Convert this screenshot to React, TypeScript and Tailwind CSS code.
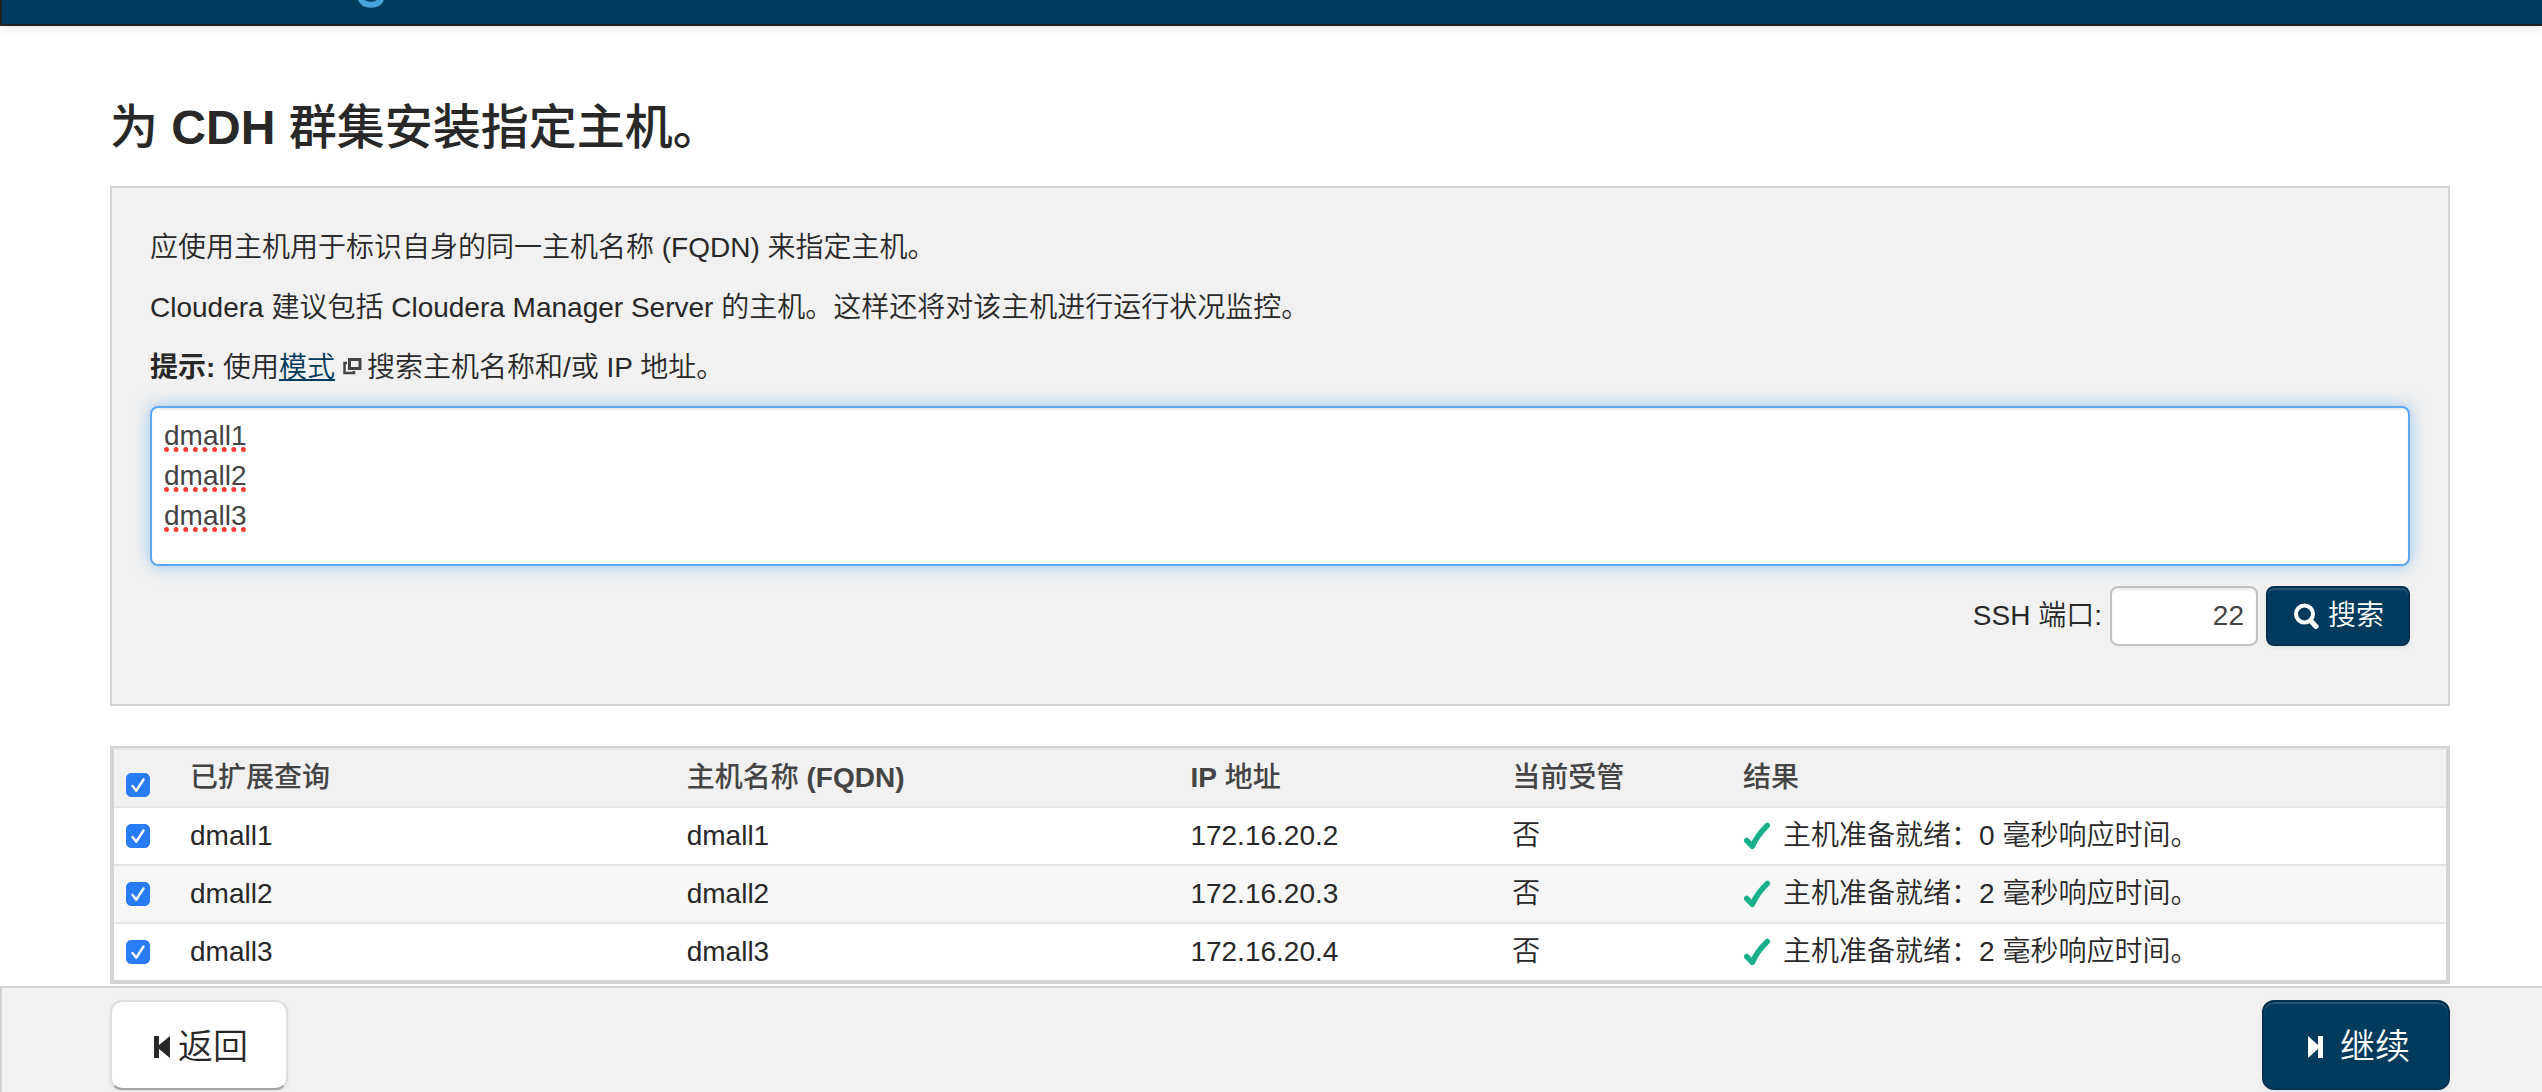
import { useState } from 'react';

type Host = {
  query: string;
  fqdn: string;
  ip: string;
  managed: boolean;
  latency: number;
};

const hosts: Host[] = [
  { query: 'dmall1', fqdn: 'dmall1', ip: '172.16.20.2', managed: false, latency: 0 },
  { query: 'dmall2', fqdn: 'dmall2', ip: '172.16.20.3', managed: false, latency: 2 },
  { query: 'dmall3', fqdn: 'dmall3', ip: '172.16.20.4', managed: false, latency: 2 },
];

const primaryBtn =
  'flex items-center justify-center bg-[#003a5c] text-white border-2 border-[#00304d] shadow-[inset_0_2px_0_rgba(255,255,255,0.15),0_2px_4px_rgba(0,0,0,0.06)]';

const SearchIcon = () => (
  <svg className="w-7 h-7" viewBox="0 0 28 28" fill="none" stroke="currentColor">
    <circle cx="12.5" cy="12" r="8.5" strokeWidth="4" />
    <path d="M18.5 18.5L24 24.5" strokeWidth="5" strokeLinecap="round" />
  </svg>
);

const ExternalIcon = () => (
  <svg
    className="inline-block w-5 h-5 mr-1 align-baseline"
    viewBox="0 0 20 20"
    fill="none"
    stroke="#444"
  >
    <rect x="6.5" y="2.5" width="10.500" height="9" strokeWidth="3" />
    <path d="M4 6H1.500V16H11V14" strokeWidth="2.5" />
  </svg>
);

const GoodIcon = () => (
  <svg
    className="w-7 h-7 shrink-0"
    viewBox="0 0 28 28"
    fill="none"
    stroke="#1bb08c"
    strokeWidth="5.5"
    strokeLinecap="round"
    strokeLinejoin="round"
  >
    <path d="M3.7 18.5L9.3 24.3Q14 13.5 24.3 3.5" />
  </svg>
);

const Checkbox = ({
  label,
  checked,
  onChange,
}: {
  label: string;
  checked: boolean;
  onChange: () => void;
}) => (
  <span className="relative block w-6 h-6">
    <input
      type="checkbox"
      aria-label={label}
      checked={checked}
      onChange={onChange}
      className="peer block appearance-none w-6 h-6 rounded-[5px] border border-[#b5b5b5] bg-white checked:border-[#2a7bf6] checked:bg-[#2a7bf6]"
    />
    <svg
      className="absolute inset-0 w-6 h-6 pointer-events-none opacity-0 peer-checked:opacity-100"
      viewBox="0 0 24 24"
      fill="none"
      stroke="white"
      strokeWidth="2.4"
      strokeLinecap="round"
      strokeLinejoin="round"
    >
      <path d="M6.5 13L10.3 17.7L17.5 6.5" />
    </svg>
  </span>
);

const App = () => {
  const [pattern, setPattern] = useState(hosts.map((h) => h.query).join('\n'));
  const [port, setPort] = useState('22');
  const [selected, setSelected] = useState<string[]>(hosts.map((h) => h.fqdn));

  const allSelected = selected.length === hosts.length;

  const toggle = (fqdn: string) => {
    setSelected((prev) =>
      prev.includes(fqdn) ? prev.filter((f) => f !== fqdn) : [...prev, fqdn]
    );
  };

  return (
    <div className="flex flex-col h-screen overflow-hidden bg-white text-[#282828] text-[28px] leading-10 font-[350] font-['Liberation_Sans','Noto_Sans_CJK_SC',sans-serif]">
      {/* bottom slice of the navbar, only the tail of the logo's "g" shows */}
      <header className="shrink-0 h-[26px] pl-[354px] bg-[#003a5c] border-l-2 border-b-2 border-[#222] shadow-[0_2px_10px_rgba(0,0,0,0.1)]">
        <svg className="w-9 h-3" viewBox="0 0 36 12" fill="none" stroke="#45a5dc">
          <path d="M5-2C5 7 25 7 25-2" strokeWidth="6" />
        </svg>
      </header>

      <main className="flex-1 min-h-0 overflow-hidden pl-[110px] pr-[92px] pt-[72px]">
        <h1 className="text-5xl leading-[60px] font-medium mb-7">
          为 <span className="font-bold">CDH</span> 群集安装指定主机。
        </h1>

        <section className="bg-[#f1f1f1] border-2 border-[#d3d3d3] px-[38px] pt-10 pb-[58px] mb-10">
          <p className="mb-5">应使用主机用于标识自身的同一主机名称 (FQDN) 来指定主机。</p>
          <p className="mb-5">
            Cloudera 建议包括 Cloudera Manager Server 的主机。这样还将对该主机进行运行状况监控。
          </p>
          <p className="mb-[18px]">
            <strong className="font-bold">提示:</strong> 使用
            <a href="#patterns" className="text-[#003a5c] underline">
              模式
            </a>{' '}
            <ExternalIcon />
            搜索主机名称和/或 IP 地址。
          </p>
          {/* dotted red underline = host names the spell checker doesn't know */}
          <textarea
            aria-label="主机名称"
            value={pattern}
            onChange={(e) => setPattern(e.target.value)}
            spellCheck={false}
            className="block w-full h-40 px-3 py-2 resize-none outline-none rounded-lg bg-white text-[#444] border-2 border-[#5ea6ee] shadow-[inset_0_2px_2px_rgba(0,0,0,0.075),0_0_16px_rgba(82,168,236,0.6)] underline decoration-dotted decoration-[#ff3b30] decoration-[5px] underline-offset-2 [text-decoration-skip-ink:none]"
          />
          <div className="flex justify-end items-center gap-2 mt-5">
            <label htmlFor="ssh-port">SSH 端口:</label>
            <input
              id="ssh-port"
              type="text"
              value={port}
              onChange={(e) => setPort(e.target.value)}
              className="w-[148px] h-[60px] px-3 text-right outline-none rounded-lg bg-white text-[#444] border-2 border-[#c0c0c0] shadow-[inset_0_2px_2px_rgba(0,0,0,0.075)]"
            />
            <button type="button" className={`${primaryBtn} w-36 h-[60px] gap-2 rounded-lg`}>
              <SearchIcon />
              搜索
            </button>
          </div>
        </section>

        <div className="border-2 border-[#d3d3d3]">
          <table className="w-full table-fixed border-separate border-spacing-0 border-2 border-[#d3d3d3] border-t-[#e6e6e6] text-left">
            <thead>
              <tr className="bg-[#f1f1f1] text-[#444]">
                <th className="w-16 px-3 pt-3.5">
                  <Checkbox
                    label="全选"
                    checked={allSelected}
                    onChange={() => setSelected(allSelected ? [] : hosts.map((h) => h.fqdn))}
                  />
                </th>
                <th className="w-[21.3%] px-3 py-2 font-medium">已扩展查询</th>
                <th className="w-[21.6%] px-3 py-2 font-medium">
                  主机名称 <span className="font-bold">(FQDN)</span>
                </th>
                <th className="w-[13.8%] px-3 py-2 font-medium">
                  <span className="font-bold">IP</span> 地址
                </th>
                <th className="w-[9.9%] px-3 py-2 font-medium">当前受管</th>
                <th className="px-3 py-2 font-medium">结果</th>
              </tr>
            </thead>
            <tbody>
              {hosts.map((host) => (
                <tr
                  key={host.fqdn}
                  className="even:bg-[#f7f7f7] *:border-t-2 *:border-[#e6e6e6] *:px-3 *:py-2"
                >
                  <td>
                    <Checkbox
                      label={host.fqdn}
                      checked={selected.includes(host.fqdn)}
                      onChange={() => toggle(host.fqdn)}
                    />
                  </td>
                  <td>{host.query}</td>
                  <td>{host.fqdn}</td>
                  <td>{host.ip}</td>
                  <td>{host.managed ? '是' : '否'}</td>
                  <td>
                    <div className="flex items-center gap-3">
                      <GoodIcon />
                      <span>主机准备就绪：{host.latency} 毫秒响应时间。</span>
                    </div>
                  </td>
                </tr>
              ))}
            </tbody>
          </table>
        </div>
      </main>

      <footer className="shrink-0 flex justify-between pl-[108px] pr-[92px] pt-3 pb-0.5 bg-[#f1f1f1] border-t-2 border-l-2 border-[#d3d3d3] text-[35px]">
        <button
          type="button"
          className="flex items-center justify-center gap-2 w-[178px] h-[90px] pt-1 pl-1 rounded-xl bg-white border-2 border-[#dfdfdf] border-b-[#a2a2a2] shadow-[0_2px_4px_rgba(0,0,0,0.06)]"
        >
          <svg className="w-4 h-6" viewBox="0 0 16 24" fill="#282828">
            <path d="M0 1H5V10L16 1V23L5 14V23H0Z" />
          </svg>
          返回
        </button>
        <button
          type="button"
          className={`${primaryBtn} w-[188px] h-[90px] pt-1 pl-1.5 gap-4 rounded-xl`}
        >
          <svg className="w-4 h-6" viewBox="0 0 16 24" fill="white">
            <path d="M0 1L10 10V1H15V23H10V14L0 23Z" />
          </svg>
          继续
        </button>
      </footer>
    </div>
  );
};

export default App;
